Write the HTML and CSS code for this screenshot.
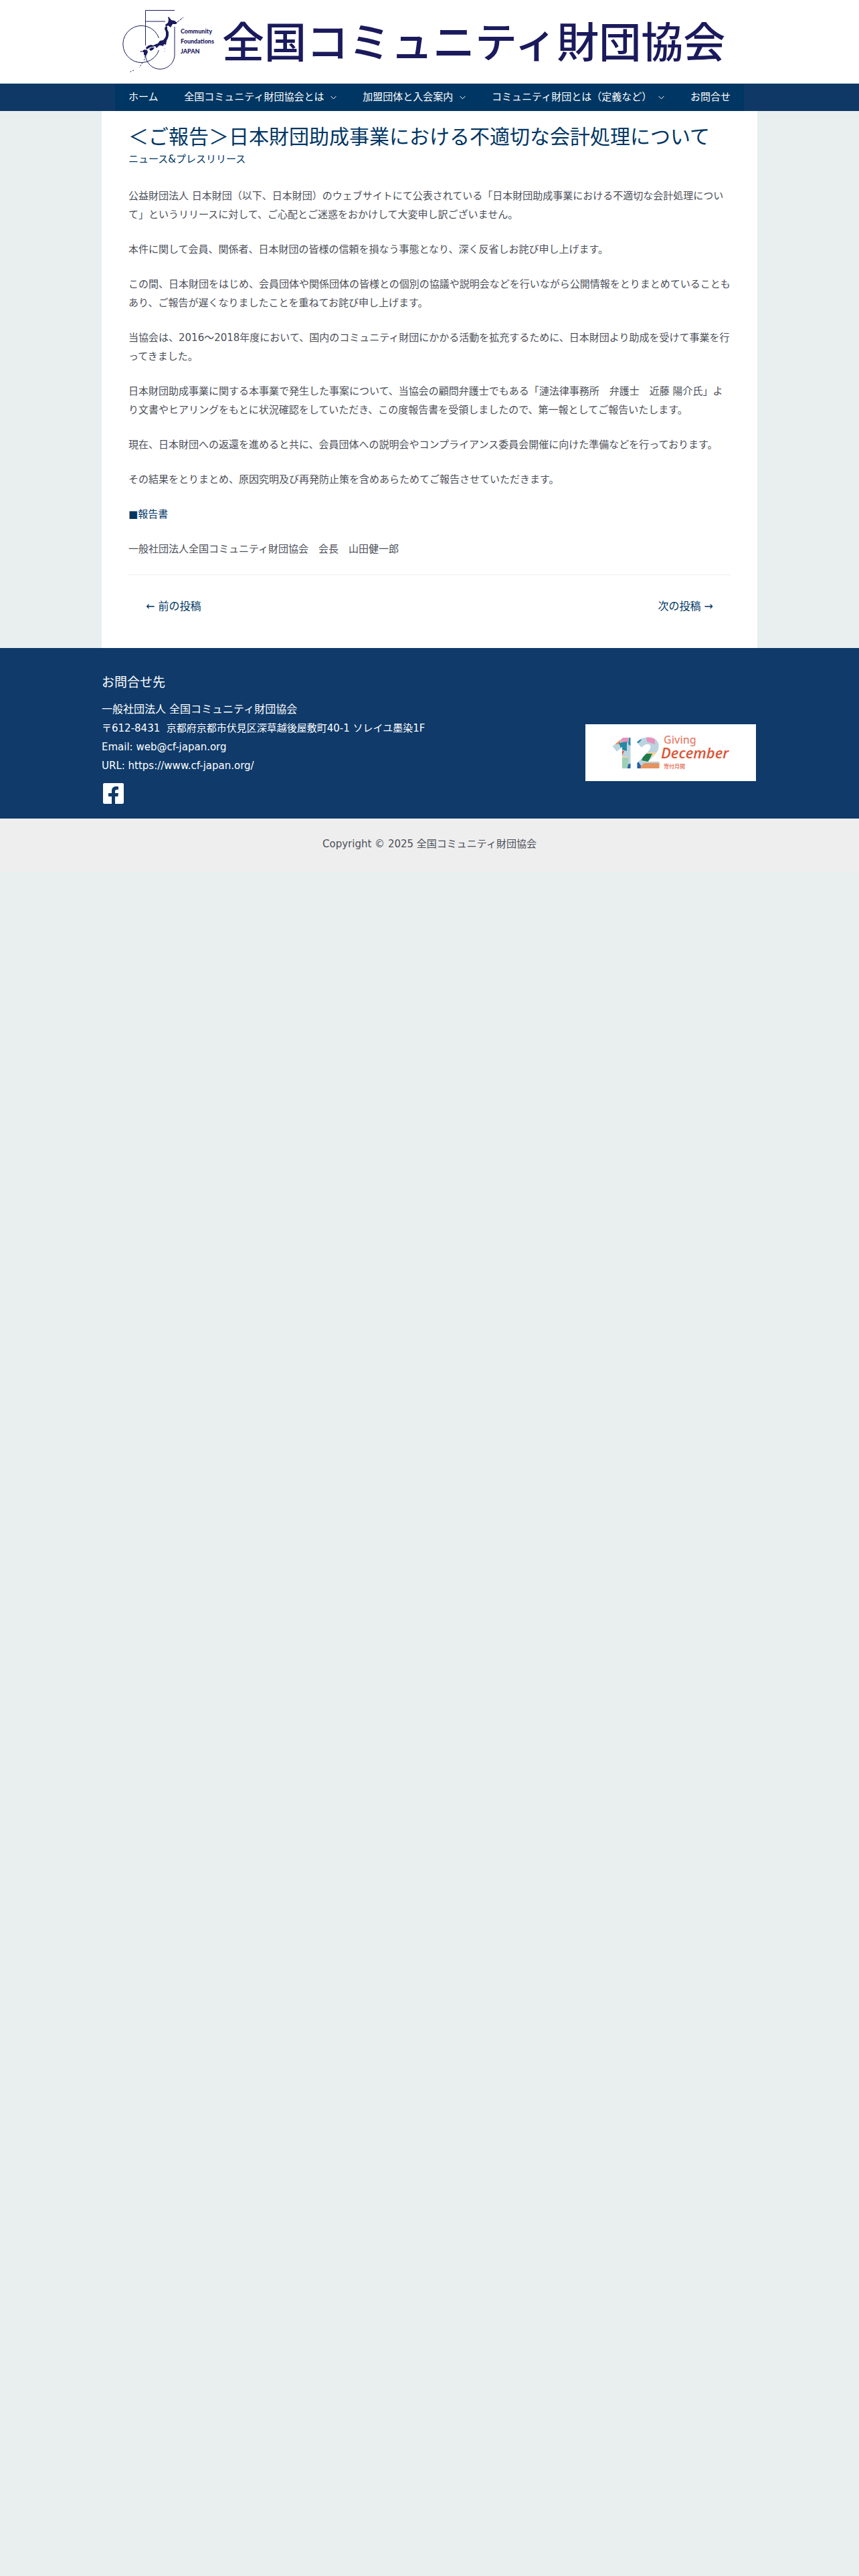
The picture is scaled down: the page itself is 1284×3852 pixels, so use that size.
FILE: index.html
```html
<!DOCTYPE html>
<html lang="ja">
<head>
    <meta charset="UTF-8">
    <meta name="viewport" content="width=device-width, initial-scale=1.0">
    <title>＜ご報告＞日本財団助成事業における不適切な会計処理について</title>
    <link rel="stylesheet" href="styles.css">
</head>
<body>

<!-- Header -->
<header class="site-header">
    <a href="#" class="site-logo" aria-label="全国コミュニティ財団協会">
        <svg viewBox="172 0 940 125">
            <g fill="none" stroke="#1b1a5c" stroke-width="1">
                <path d="M237.5 57A27.6 27.6 0 1 0 237.5 75"/>
                <path d="M261 15.500H217.500V68"/>
                <path d="M217.500 32H247"/>
                <path d="M261 40V83A21.800 21.800 0 0 1 217.500 83"/>
                <path d="M265 33L274 26" stroke-dasharray="4 1"/>
                <path d="M217 84L215 92M213 94L208 101M200 105L193 108" stroke-dasharray="2 2"/>
                <path d="M246 68V78" stroke-width=".5" stroke-dasharray="1 3"/>
            </g>
            <!-- Japan map -->
            <g fill="#1b1a5c">
                <path d="M251 25l2 1 3 4 5 1 4 3-2 2-5 0-3 5-4-3-1 1-2 1-1-3 4-3 1-4z"/>
                <path d="M247 40l3 0 0 4 2 4 0 5-1 4-2 4-1 6-3-1-1 3-3-1-3 0-4 4-2-3-4 1-4 1-5 3-1-3 4-3 4-1 3 1 4-2 3-1 3-4 5-1 3-4 1-3 0-5-2-5z"/>
                <path d="M223 73l4-2 4 0-2 3-3 2-2-1z"/>
                <path d="M213 76l3-2 4 1 1 3-2 4-1 2-3-2 0-4-2 0z"/>
                <circle cx="211" cy="77" r="1"/>
            </g>
            <g class="logo-en">
                <text x="270" y="50">Community</text>
                <text x="270" y="65">Foundations</text>
                <text x="270" y="80">JAPAN</text>
            </g>
            <text class="logo-ja" x="332" y="86">全国コミュニティ財団協会</text>
        </svg>
    </a>
    <nav class="main-nav">
        <ul class="menu">
            <li><a href="#">ホーム</a></li>
            <li><a href="#">全国コミュニティ財団協会とは<svg class="arrow" viewBox="0 0 9 6"><path d="M.5 .8l4 4 4-4"/></svg></a></li>
            <li><a href="#">加盟団体と入会案内<svg class="arrow" viewBox="0 0 9 6"><path d="M.5 .8l4 4 4-4"/></svg></a></li>
            <li><a href="#">コミュニティ財団とは（定義など）<svg class="arrow" viewBox="0 0 9 6"><path d="M.5 .8l4 4 4-4"/></svg></a></li>
            <li><a href="#">お問合せ</a></li>
        </ul>
    </nav>
</header>

<!-- Article -->
<main class="content">
    <article>
        <h1>＜ご報告＞日本財団助成事業における不適切な会計処理について</h1>
        <a href="#" class="category">ニュース&amp;プレスリリース</a>
        <div class="entry">
            <p>公益財団法人 日本財団（以下、日本財団）のウェブサイトにて公表されている「日本財団助成事業における不適切な会計処理について」というリリースに対して、ご心配とご迷惑をおかけして大変申し訳ございません。</p>
            <p>本件に関して会員、関係者、日本財団の皆様の信頼を損なう事態となり、深く反省しお詫び申し上げます。</p>
            <p>この間、日本財団をはじめ、会員団体や関係団体の皆様との個別の協議や説明会などを行いながら公開情報をとりまとめていることもあり、ご報告が遅くなりましたことを重ねてお詫び申し上げます。</p>
            <p>当協会は、2016〜2018年度において、国内のコミュニティ財団にかかる活動を拡充するために、日本財団より助成を受けて事業を行ってきました。</p>
            <p>日本財団助成事業に関する本事業で発生した事案について、当協会の顧問弁護士でもある「漣法律事務所　弁護士　近藤 陽介氏」より文書やヒアリングをもとに状況確認をしていただき、この度報告書を受領しましたので、第一報としてご報告いたします。</p>
            <p>現在、日本財団への返還を進めると共に、会員団体への説明会やコンプライアンス委員会開催に向けた準備などを行っております。</p>
            <p>その結果をとりまとめ、原因究明及び再発防止策を含めあらためてご報告させていただきます。</p>
            <p><a href="#">■報告書</a></p>
            <p>一般社団法人全国コミュニティ財団協会　会長　山田健一郎</p>
        </div>
    </article>
    <nav class="post-nav">
        <a href="#">← 前の投稿</a>
        <a href="#">次の投稿 →</a>
    </nav>
</main>

<!-- Footer -->
<footer>
    <div class="footer-widgets">
        <div class="footer-inner">
            <div class="contact">
                <h2>お問合せ先</h2>
                <p class="org">一般社団法人 全国コミュニティ財団協会</p>
                <p>〒612-8431&nbsp; 京都府京都市伏見区深草越後屋敷町40-1 ソレイユ墨染1F</p>
                <p>Email: web@cf-japan.org</p>
                <p>URL: https://www.cf-japan.org/</p>
                <a href="#" class="facebook" aria-label="Facebook">
                    <svg viewBox="0 0 31 31">
                        <path fill="#fff" d="M2 0h27a2 2 0 0 1 2 2v27a2 2 0 0 1-2 2H18V20h4.300l.7-5H18v-2.500c0-2 .8-2.800 2.800-2.800H23V5.300C22.200 5.100 20.800 5 19.500 5c-4.200 0-6.500 2.500-6.500 6.700V15H8v5h5v11H2a2 2 0 0 1-2-2V2a2 2 0 0 1 2-2z"/>
                    </svg>
                </a>
            </div>
            <a href="#" class="banner" aria-label="Giving December">
                <svg viewBox="0 0 255 85">
                    <defs>
                        <pattern id="mosaic" width="76" height="60" x="40" y="14" patternUnits="userSpaceOnUse">
                            <path fill="#bcd3e0" d="M0 0h76v60H0z"/>
                            <path fill="#e88a62" d="M0 0h12v16H0z"/>
                            <path fill="#e693bd" d="M10 0h14v14H14zM50 0h14v16l-12-4z"/>
                            <path fill="#2489a3" d="M10 14l12-2v14l-8-2zM26 0h22l-6 12-12 8-6-4z"/>
                            <path fill="#e2502f" d="M8 26h10l-4 9-6-2z"/>
                            <path fill="#f3d3a0" d="M0 34h22v8H0zM46 28h20v6H44z"/>
                            <path fill="#9fd0b4" d="M10 36h14v20H16zM32 34h8v10h-8z"/>
                            <path fill="#e0558f" d="M0 42l12 2 4 14H0z"/>
                            <path fill="#1d7d48" d="M48 30h12l-6 12-10-2z"/>
                            <path fill="#2761a8" d="M24 46l14-6 10 16H22z"/>
                            <path fill="#e59460" d="M48 44h28v14H46l-4-8z"/>
                        </pattern>
                    </defs>
                    <path fill="#fff" d="M0 0h255v85H0z"/>
                    <text class="twelve" x="38" y="66" fill="url(#mosaic)">12</text>
                    <text class="giving" x="117" y="29">Giving</text>
                    <text class="december" x="113" y="51">December</text>
                    <text class="month" x="117" y="66">寄付月間</text>
                </svg>
            </a>
        </div>
    </div>
    <div class="copyright">Copyright © 2025 全国コミュニティ財団協会</div>
</footer>

</body>
</html>
```
FILE: styles.css
```css
/* General Page Styling */
* {
    box-sizing: border-box;
}

body {
    margin: 0;
    font-family: "DejaVu Sans", "Noto Sans CJK JP", sans-serif;
    font-size: 15px;
    line-height: 28px;
    color: #4b4f58;
    background: #e9efef;
}

h1, h2, p, ul {
    margin: 0;
    padding: 0;
    font-weight: 400;
}

a {
    color: #003663;
    text-decoration: none;
}

svg {
    display: block;
}

/* Header */
.site-header {
    background: #fff;
}

.site-logo {
    display: block;
    max-width: 940px;
    margin: 0 auto;
}

.logo-en {
    font-family: Lato, sans-serif;
    font-size: 9px;
    font-weight: 900;
    fill: #1b1a5c;
}

.logo-ja {
    font-family: "Noto Sans CJK JP", sans-serif;
    font-size: 63px;
    font-weight: 500;
    fill: #1b1a5c;
}

/* Navigation */
.main-nav {
    background: #0f3866;
}

.menu {
    display: flex;
    flex-wrap: wrap;
    justify-content: space-between;
    max-width: 940px;
    margin: 0 auto;
    padding: 0 20px;
    list-style: none;
    background: #003663;
}

.menu a {
    display: flex;
    align-items: center;
    gap: 10px;
    line-height: 41px;
    color: #fff;
}

.arrow {
    width: 9px;
    height: 6px;
    fill: none;
    stroke: #fff;
}

/* Article */
.content {
    max-width: 980px;
    margin: 0 auto;
    padding: 20px 40px 48px;
    background: #fff;
}

h1 {
    font-size: 30px;
    line-height: 38px;
    color: #003663;
}

.category {
    display: block;
}

.entry {
    margin-top: 27px;
}

.entry p {
    margin-bottom: 24px;
}

.post-nav {
    display: flex;
    justify-content: space-between;
    padding: 33px 26px 0;
    border-top: 1px solid #eee;
    font-size: 16px;
}

/* Footer */
.footer-widgets {
    background: #0f3a69;
    color: #fff;
}

.footer-inner {
    display: flex;
    justify-content: space-between;
    align-items: center;
    max-width: 980px;
    margin: 0 auto;
    padding: 37px 2px 22px 0;
}

.contact h2 {
    margin-bottom: 13px;
    font-size: 19px;
}

.contact .org {
    font-size: 16px;
}

.facebook {
    display: block;
    width: 31px;
    margin: 12px 0 0 2px;
}

.banner {
    flex: 0 1 255px;
    margin-top: 42px;
}

.twelve {
    font-family: "Open Sans", sans-serif;
    font-size: 64px;
    font-weight: 800;
}

.giving {
    font-family: "Noto Sans", sans-serif;
    font-size: 16px;
    font-weight: 500;
    fill: #e8806a;
}

.december {
    font-family: "Open Sans", sans-serif;
    font-size: 22px;
    font-style: italic;
    font-weight: 600;
    fill: #dc5536;
}

.month {
    font-family: "Noto Sans CJK JP", sans-serif;
    font-size: 8px;
    font-weight: 700;
    fill: #e8806a;
}

.copyright {
    padding: 24px 20px 28px;
    text-align: center;
    background: #eee;
}
```
